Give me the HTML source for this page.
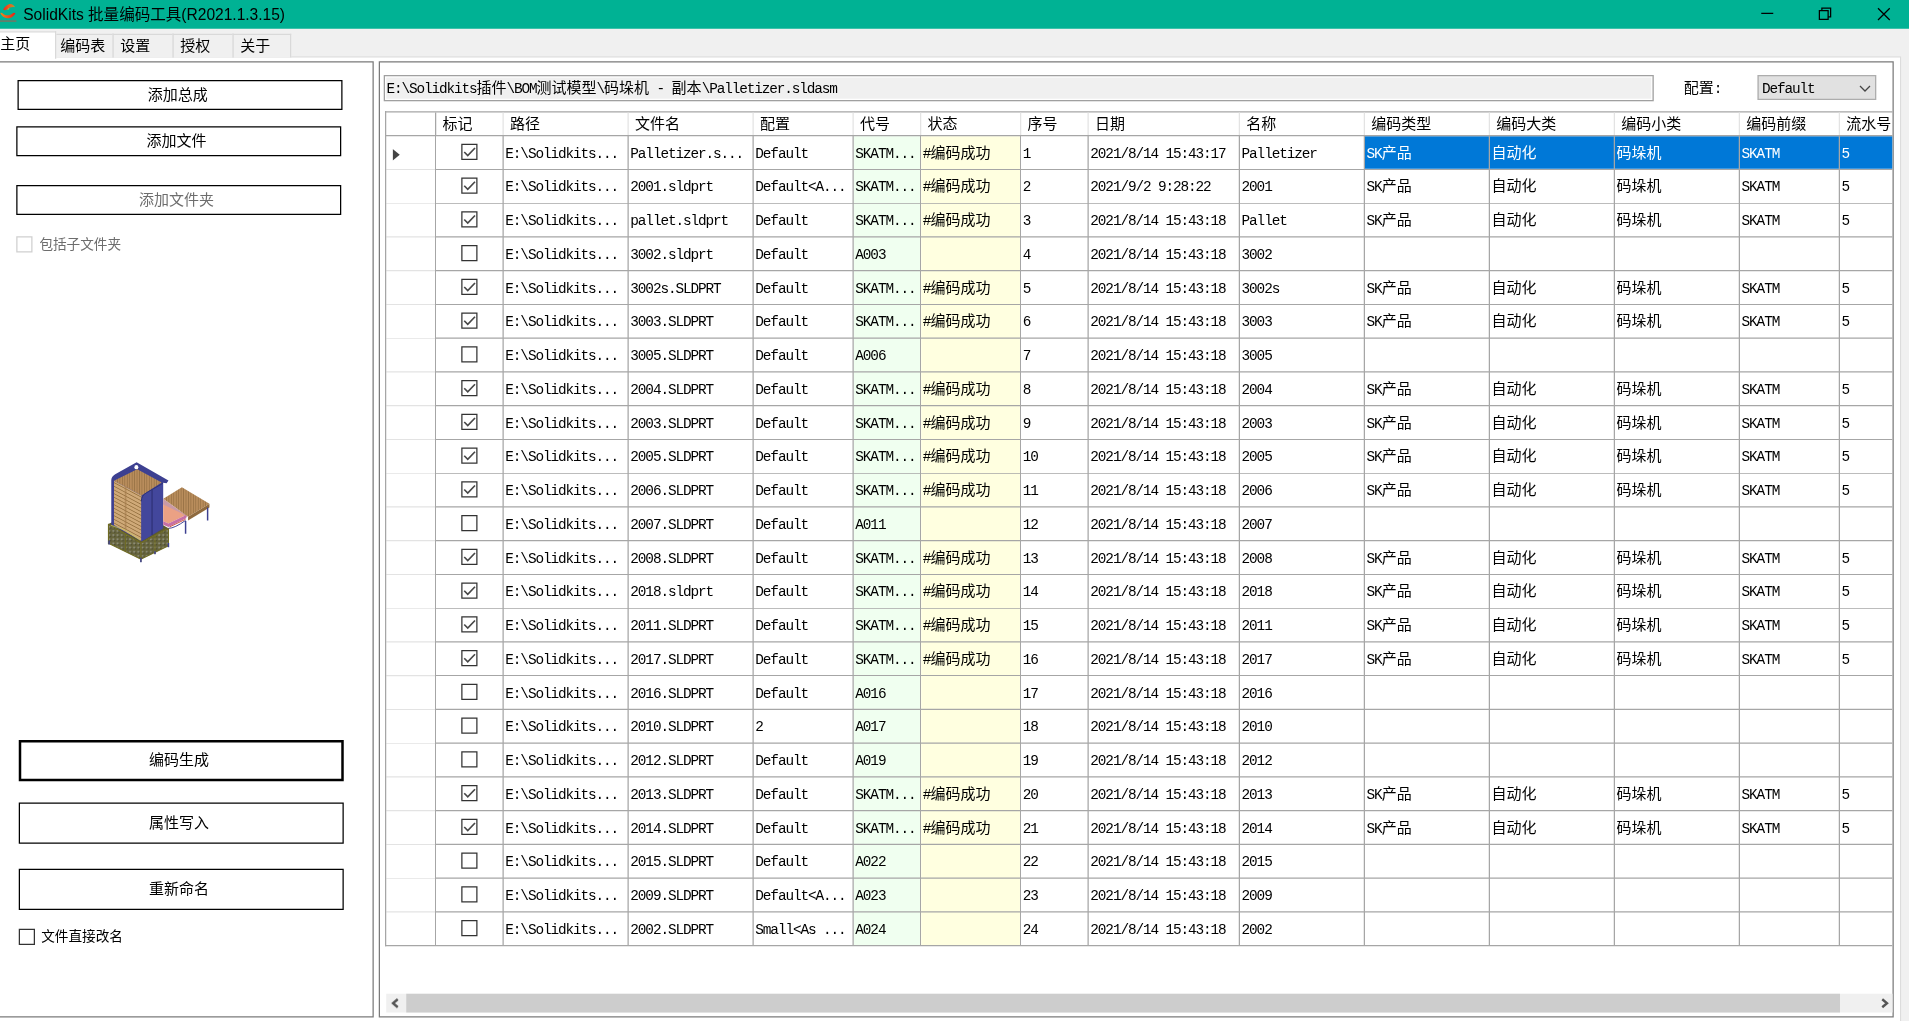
<!DOCTYPE html>
<html lang="zh-CN"><head><meta charset="utf-8"><title>SolidKits 批量编码工具(R2021.1.3.15)</title>
<style>
html,body{margin:0;padding:0}
body{width:1909px;height:1021px;overflow:hidden;background:#f0f0f0;position:relative}
#app{position:absolute;left:0;top:0;width:1528px;height:818px;transform:scale(1.25);transform-origin:0 0;overflow:hidden;will-change:transform;
 font-family:"Liberation Mono","Noto Sans CJK SC",monospace;font-size:11.5px;letter-spacing:-0.9px;color:#000}
.c{letter-spacing:0;font-size:12px}
#app div,#app span{box-sizing:border-box}
#app>div,#app>svg,#grid>div,#grid>svg{position:absolute}
#title{left:0;top:0;width:1528px;height:23px;background:#00b294}
#title .t{position:absolute;left:18.6px;top:1px;height:23px;line-height:22px;white-space:nowrap;
 font-family:"Liberation Sans","Noto Sans CJK SC",sans-serif;font-size:12.45px;letter-spacing:0}
.tab{top:27px;height:19px;border:1px solid #d9d9d9;border-bottom:none;background:#f0f0f0;
 font-family:"Liberation Sans","Noto Sans CJK SC",sans-serif;font-size:12px;letter-spacing:0;line-height:18px;padding-left:4px;white-space:nowrap}
.tab.sel{top:25px;height:22px;background:#fff;line-height:19px;padding-left:1px;border-left:none;z-index:3}
#page{left:-1px;top:45px;width:1522px;height:780px;background:#fff;border:1px solid #dcdcdc}
.panel{background:#fff;border:1px solid #7a7a7a}
.btn{background:#fff;border:1px solid #000;text-align:center;white-space:nowrap;letter-spacing:0;font-size:12px}
.txt{white-space:nowrap}
.cell{white-space:nowrap;overflow:hidden;padding-left:1.3px}
.hd{white-space:nowrap;overflow:hidden;padding-left:5px;letter-spacing:0;font-size:12px}
.ln{background:#a6a6a6}
.ll{background:#e3e3e3}
.cb{width:13px;height:13px;border:1px solid #333;background:#fff}
.sm{font-size:10.9px;letter-spacing:0}
</style></head><body><div id="app">

<div id="title">
<svg style="position:absolute;left:0;top:0" width="14.4" height="19.2" viewBox="0 0 18 24">
<defs><linearGradient id="g1" x1="0" x2="1"><stop offset="0" stop-color="#e62a1e"/><stop offset=".45" stop-color="#ea5a1e"/><stop offset="1" stop-color="#b8962e"/></linearGradient>
<linearGradient id="g2" x1="0" x2="1"><stop offset="0" stop-color="#f08a18"/><stop offset=".45" stop-color="#ea5a1c"/><stop offset="1" stop-color="#e81c14"/></linearGradient></defs>
<path d="M3.2 9.8C4.5 6.5 8 4 10.5 4.1C12.5 4.2 14 5.5 15.2 7.3C12.5 6.6 9.5 7.2 7.5 9.2C6 10.2 4.2 10.4 3.2 9.8Z" fill="url(#g1)"/>
<path d="M7 9.4L9.6 7.8L8.6 9.6Z" fill="#e8c020"/>
<path d="M0.3 13C1.2 12.6 2 12.8 2.8 13.6C5 16 9.5 16 12.3 13.4C13.2 12.5 14.6 12.4 15.5 13.2C14 16.5 10.5 18.4 7.5 18.2C4.2 18 1.5 16 0.3 13Z" fill="url(#g2)"/>
<rect x="0" y="20.2" width="16.4" height="1.8" fill="#8a6a5a" opacity=".7"/>
</svg>
<div class="t">SolidKits 批量编码工具(R2021.1.3.15)</div>
<svg style="position:absolute;left:1389px;top:0" width="138" height="23" viewBox="0 0 138 23" fill="none" stroke="#000" stroke-width="1">
<path d="M20 10.6H29.6"/>
<path d="M66.5 8.5H73.5V15.5H66.5Z M68.5 8.5V6.5H75.5V13.5H73.5"/>
<path d="M113.4 6.6L122.8 16M122.8 6.6L113.4 16"/>
</svg>
</div>
<div id="page"></div>
<div class="tab sel" style="left:0px;width:45px;padding-left:0.2px">主页</div>
<div class="tab" style="left:44px;width:47px;padding-left:3.2px">编码表</div>
<div class="tab" style="left:90px;width:49px;padding-left:5.3px">设置</div>
<div class="tab" style="left:138px;width:49px;padding-left:5.3px">授权</div>
<div class="tab" style="left:186px;width:47px;padding-left:5.3px">关于</div>
<div class="panel" style="left:-3px;top:49px;width:302px;height:765px"></div>
<div class="btn" style="left:14px;top:64px;width:260px;height:24px;line-height:24.6px;border-width:1px;color:#000;padding-right:3.4px">添加总成</div>
<div class="btn" style="left:13px;top:101px;width:260px;height:24px;line-height:24.6px;border-width:1px;color:#000;padding-right:3.4px">添加文件</div>
<div class="btn" style="left:13px;top:148px;width:260px;height:24px;line-height:24.6px;border-width:1px;color:#6d6d6d;padding-right:3.4px">添加文件夹</div>
<div class="cb" style="left:13px;top:189px;border-color:#cfcfcf"></div>
<div class="txt sm" style="left:31.5px;top:186.5px;height:18px;line-height:18px;color:#6d6d6d">包括子文件夹</div>
<div class="btn" style="left:15px;top:592px;width:260px;height:33px;line-height:31.6px;border-width:2px;color:#000;padding-right:3.4px">编码生成</div>
<div class="btn" style="left:15px;top:642px;width:260px;height:33px;line-height:33.6px;border-width:1px;color:#000;padding-right:3.4px">属性写入</div>
<div class="btn" style="left:15px;top:695px;width:260px;height:33px;line-height:33.6px;border-width:1px;color:#000;padding-right:3.4px">重新命名</div>
<div class="cb" style="left:15px;top:743px"></div>
<div class="txt sm" style="left:33px;top:740.5px;height:18px;line-height:18px">文件直接改名</div>
<svg style="left:76px;top:360px" width="104" height="100" viewBox="0 0 1062 1021">
<defs>
<pattern id="pw" width="20" height="15" patternUnits="userSpaceOnUse" patternTransform="skewY(-27)"><rect width="26" height="15" fill="#b98d5c"/><rect width="5" height="15" fill="#8f6a3e"/></pattern>
<pattern id="ps" width="40" height="30" patternUnits="userSpaceOnUse" patternTransform="skewY(28)"><rect width="40" height="30" fill="#cfa978"/><rect width="40" height="7" fill="#94703f"/></pattern>
<pattern id="pb" width="34" height="34" patternUnits="userSpaceOnUse"><rect width="34" height="34" fill="#66643c"/><rect x="6" y="8" width="16" height="14" fill="#8c8c78"/><rect x="20" y="22" width="10" height="8" fill="#44452e"/></pattern>
</defs>
<!-- back blue frame -->
<path d="M110 605L375 760L600 640L340 490Z" fill="#5d5b30"/>
<path d="M133 610V245Q135 215 165 198L340 100L600 250L585 272L557 268V640L380 745Z" fill="#3d4091"/>
<ellipse cx="338" cy="140" rx="16" ry="18" fill="#fff"/>
<!-- stack top and left face -->
<path d="M155 252L345 157L545 265L380 372Z" fill="url(#pw)"/>
<path d="M155 252L380 372V745L155 612Z" fill="url(#ps)"/>
<path d="M250 300V665" stroke="#a27a4a" stroke-width="14" opacity=".6"/>
<!-- blue front panels -->
<path d="M378 420Q380 372 420 350L555 272V642L378 748Z" fill="#43479c"/>
<path d="M466 325V695" stroke="#2c2f74" stroke-width="9"/>
<path d="M378 420Q380 372 420 350L555 272" fill="none" stroke="#2f3278" stroke-width="8"/>
<!-- base -->
<path d="M110 605L375 760V892L110 762Z" fill="url(#pb)"/>
<path d="M375 760L600 640V782L375 892Z" fill="url(#pb)"/>
<path d="M110 605L375 760L600 640M110 762L375 892L600 782M110 605V770M375 760V915M600 640V792M490 700V850M250 690V828" fill="none" stroke="#6e6a22" stroke-width="9"/>
<path d="M115 740V772M375 880V917M600 760V794M490 828V852" stroke="#3d4091" stroke-width="12"/>
<path d="M130 615L250 655L370 735" fill="none" stroke="#c9c46a" stroke-width="10" opacity=".7"/>
<!-- tray -->
<path d="M557 426L745 530L600 600L557 582Z" fill="#eba184"/>
<path d="M557 398L756 542L745 552L715 520L557 446Z" fill="#c99aa6"/>
<path d="M557 582L600 600L745 530V558L600 628L557 610Z" fill="#c66fa4"/>
<path d="M600 640Q650 640 740 575" fill="none" stroke="#3d4091" stroke-width="8"/>
<path d="M610 628L740 566" stroke="#c8402c" stroke-width="7"/>
<!-- right pallet -->
<path d="M558 398L710 305L935 440L760 545Z" fill="url(#pw)"/>
<path d="M760 545L935 440V470L760 575Z" fill="#8f6a3e"/>
<path d="M740 580V685M920 470V575" stroke="#3d4091" stroke-width="12"/>
</svg>

<div class="panel" style="left:303px;top:49px;width:1212px;height:765px"></div>
<div style="left:307px;top:60px;width:1016px;height:21px;background:#f0f0f0;border:1px solid #a0a0a0;box-shadow:inset 1px 1px 0 #fff,inset -1px -1px 0 #fff"></div>
<div class="txt" style="left:309.2px;top:59.75px;height:21px;line-height:21px">E:\Solidkits<span class="c">插件</span>\BOM<span class="c">测试模型</span>\<span class="c">码垛机</span> - <span class="c">副本</span>\Palletizer.sldasm</div>
<div class="txt" style="left:1347px;top:60px;height:21px;line-height:21px"><span class="c">配置</span>:</div>
<div style="left:1406px;top:60px;width:95px;height:20px;background:#e1e1e1;border:1px solid #adadad"></div>
<div class="txt" style="left:1409.5px;top:61.2px;height:20px;line-height:20px">Default</div>
<svg style="left:1486px;top:66px" width="12" height="10" viewBox="0 0 12 10" fill="none" stroke="#444" stroke-width="1"><path d="M2 2.8L6 6.8L10 2.8"/></svg>
<div id="grid" style="left:0;top:0;width:1514px;height:817px;overflow:hidden">
<div style="left:683px;top:109px;width:53px;height:647px;background:#f0fff0"></div>
<div style="left:737px;top:109px;width:79px;height:647px;background:#ffffe0"></div>
<div style="left:1092px;top:109px;width:422px;height:26px;background:#0078d7"></div>
<div class="hd" style="left:349px;top:90px;width:53px;height:18px;line-height:21.4px">标记</div>
<div class="hd" style="left:403px;top:90px;width:99px;height:18px;line-height:21.4px">路径</div>
<div class="hd" style="left:503px;top:90px;width:99px;height:18px;line-height:21.4px">文件名</div>
<div class="hd" style="left:603px;top:90px;width:79px;height:18px;line-height:21.4px">配置</div>
<div class="hd" style="left:683px;top:90px;width:53px;height:18px;line-height:21.4px">代号</div>
<div class="hd" style="left:737px;top:90px;width:79px;height:18px;line-height:21.4px">状态</div>
<div class="hd" style="left:817px;top:90px;width:53px;height:18px;line-height:21.4px">序号</div>
<div class="hd" style="left:871px;top:90px;width:120px;height:18px;line-height:21.4px">日期</div>
<div class="hd" style="left:992px;top:90px;width:99px;height:18px;line-height:21.4px">名称</div>
<div class="hd" style="left:1092px;top:90px;width:99px;height:18px;line-height:21.4px">编码类型</div>
<div class="hd" style="left:1192px;top:90px;width:99px;height:18px;line-height:21.4px">编码大类</div>
<div class="hd" style="left:1292px;top:90px;width:99px;height:18px;line-height:21.4px">编码小类</div>
<div class="hd" style="left:1392px;top:90px;width:79px;height:18px;line-height:21.4px">编码前缀</div>
<div class="hd" style="left:1472px;top:90px;width:88px;height:18px;line-height:21.4px">流水号</div>
<div class="cell" style="left:403px;top:109px;width:99px;height:26px;line-height:28px">E:\Solidkits...</div>
<div class="cell" style="left:503px;top:109px;width:99px;height:26px;line-height:28px">Palletizer.s...</div>
<div class="cell" style="left:603px;top:109px;width:79px;height:26px;line-height:28px">Default</div>
<div class="cell" style="left:683px;top:109px;width:53px;height:26px;line-height:28px">SKATM...</div>
<div class="cell" style="left:737px;top:109px;width:79px;height:26px;line-height:28px">#<span class="c">编码成功</span></div>
<div class="cell" style="left:817px;top:109px;width:53px;height:26px;line-height:28px">1</div>
<div class="cell" style="left:871px;top:109px;width:120px;height:26px;line-height:28px">2021/8/14 15:43:17</div>
<div class="cell" style="left:992px;top:109px;width:99px;height:26px;line-height:28px">Palletizer</div>
<div class="cell" style="left:1092px;top:109px;width:99px;height:26px;line-height:28px;color:#fff">SK<span class="c">产品</span></div>
<div class="cell" style="left:1192px;top:109px;width:99px;height:26px;line-height:28px;color:#fff"><span class="c">自动化</span></div>
<div class="cell" style="left:1292px;top:109px;width:99px;height:26px;line-height:28px;color:#fff"><span class="c">码垛机</span></div>
<div class="cell" style="left:1392px;top:109px;width:79px;height:26px;line-height:28px;color:#fff">SKATM</div>
<div class="cell" style="left:1472px;top:109px;width:88px;height:26px;line-height:28px;color:#fff">5</div>
<div class="cb" style="left:369px;top:115px"></div>
<svg style="left:369px;top:115px" width="13" height="13" viewBox="0 0 13 13" fill="none" stroke="#484848" stroke-width="1.35"><path d="M2.4 6.6L5.2 9.4L11 3.4"/></svg>
<div class="cell" style="left:403px;top:136px;width:99px;height:26px;line-height:28px">E:\Solidkits...</div>
<div class="cell" style="left:503px;top:136px;width:99px;height:26px;line-height:28px">2001.sldprt</div>
<div class="cell" style="left:603px;top:136px;width:79px;height:26px;line-height:28px">Default&lt;A...</div>
<div class="cell" style="left:683px;top:136px;width:53px;height:26px;line-height:28px">SKATM...</div>
<div class="cell" style="left:737px;top:136px;width:79px;height:26px;line-height:28px">#<span class="c">编码成功</span></div>
<div class="cell" style="left:817px;top:136px;width:53px;height:26px;line-height:28px">2</div>
<div class="cell" style="left:871px;top:136px;width:120px;height:26px;line-height:28px">2021/9/2 9:28:22</div>
<div class="cell" style="left:992px;top:136px;width:99px;height:26px;line-height:28px">2001</div>
<div class="cell" style="left:1092px;top:136px;width:99px;height:26px;line-height:28px">SK<span class="c">产品</span></div>
<div class="cell" style="left:1192px;top:136px;width:99px;height:26px;line-height:28px"><span class="c">自动化</span></div>
<div class="cell" style="left:1292px;top:136px;width:99px;height:26px;line-height:28px"><span class="c">码垛机</span></div>
<div class="cell" style="left:1392px;top:136px;width:79px;height:26px;line-height:28px">SKATM</div>
<div class="cell" style="left:1472px;top:136px;width:88px;height:26px;line-height:28px">5</div>
<div class="cb" style="left:369px;top:142px"></div>
<svg style="left:369px;top:142px" width="13" height="13" viewBox="0 0 13 13" fill="none" stroke="#484848" stroke-width="1.35"><path d="M2.4 6.6L5.2 9.4L11 3.4"/></svg>
<div class="cell" style="left:403px;top:163px;width:99px;height:26px;line-height:28px">E:\Solidkits...</div>
<div class="cell" style="left:503px;top:163px;width:99px;height:26px;line-height:28px">pallet.sldprt</div>
<div class="cell" style="left:603px;top:163px;width:79px;height:26px;line-height:28px">Default</div>
<div class="cell" style="left:683px;top:163px;width:53px;height:26px;line-height:28px">SKATM...</div>
<div class="cell" style="left:737px;top:163px;width:79px;height:26px;line-height:28px">#<span class="c">编码成功</span></div>
<div class="cell" style="left:817px;top:163px;width:53px;height:26px;line-height:28px">3</div>
<div class="cell" style="left:871px;top:163px;width:120px;height:26px;line-height:28px">2021/8/14 15:43:18</div>
<div class="cell" style="left:992px;top:163px;width:99px;height:26px;line-height:28px">Pallet</div>
<div class="cell" style="left:1092px;top:163px;width:99px;height:26px;line-height:28px">SK<span class="c">产品</span></div>
<div class="cell" style="left:1192px;top:163px;width:99px;height:26px;line-height:28px"><span class="c">自动化</span></div>
<div class="cell" style="left:1292px;top:163px;width:99px;height:26px;line-height:28px"><span class="c">码垛机</span></div>
<div class="cell" style="left:1392px;top:163px;width:79px;height:26px;line-height:28px">SKATM</div>
<div class="cell" style="left:1472px;top:163px;width:88px;height:26px;line-height:28px">5</div>
<div class="cb" style="left:369px;top:169px"></div>
<svg style="left:369px;top:169px" width="13" height="13" viewBox="0 0 13 13" fill="none" stroke="#484848" stroke-width="1.35"><path d="M2.4 6.6L5.2 9.4L11 3.4"/></svg>
<div class="cell" style="left:403px;top:190px;width:99px;height:26px;line-height:28px">E:\Solidkits...</div>
<div class="cell" style="left:503px;top:190px;width:99px;height:26px;line-height:28px">3002.sldprt</div>
<div class="cell" style="left:603px;top:190px;width:79px;height:26px;line-height:28px">Default</div>
<div class="cell" style="left:683px;top:190px;width:53px;height:26px;line-height:28px">A003</div>
<div class="cell" style="left:817px;top:190px;width:53px;height:26px;line-height:28px">4</div>
<div class="cell" style="left:871px;top:190px;width:120px;height:26px;line-height:28px">2021/8/14 15:43:18</div>
<div class="cell" style="left:992px;top:190px;width:99px;height:26px;line-height:28px">3002</div>
<div class="cb" style="left:369px;top:196px"></div>
<div class="cell" style="left:403px;top:217px;width:99px;height:26px;line-height:28px">E:\Solidkits...</div>
<div class="cell" style="left:503px;top:217px;width:99px;height:26px;line-height:28px">3002s.SLDPRT</div>
<div class="cell" style="left:603px;top:217px;width:79px;height:26px;line-height:28px">Default</div>
<div class="cell" style="left:683px;top:217px;width:53px;height:26px;line-height:28px">SKATM...</div>
<div class="cell" style="left:737px;top:217px;width:79px;height:26px;line-height:28px">#<span class="c">编码成功</span></div>
<div class="cell" style="left:817px;top:217px;width:53px;height:26px;line-height:28px">5</div>
<div class="cell" style="left:871px;top:217px;width:120px;height:26px;line-height:28px">2021/8/14 15:43:18</div>
<div class="cell" style="left:992px;top:217px;width:99px;height:26px;line-height:28px">3002s</div>
<div class="cell" style="left:1092px;top:217px;width:99px;height:26px;line-height:28px">SK<span class="c">产品</span></div>
<div class="cell" style="left:1192px;top:217px;width:99px;height:26px;line-height:28px"><span class="c">自动化</span></div>
<div class="cell" style="left:1292px;top:217px;width:99px;height:26px;line-height:28px"><span class="c">码垛机</span></div>
<div class="cell" style="left:1392px;top:217px;width:79px;height:26px;line-height:28px">SKATM</div>
<div class="cell" style="left:1472px;top:217px;width:88px;height:26px;line-height:28px">5</div>
<div class="cb" style="left:369px;top:223px"></div>
<svg style="left:369px;top:223px" width="13" height="13" viewBox="0 0 13 13" fill="none" stroke="#484848" stroke-width="1.35"><path d="M2.4 6.6L5.2 9.4L11 3.4"/></svg>
<div class="cell" style="left:403px;top:244px;width:99px;height:26px;line-height:28px">E:\Solidkits...</div>
<div class="cell" style="left:503px;top:244px;width:99px;height:26px;line-height:28px">3003.SLDPRT</div>
<div class="cell" style="left:603px;top:244px;width:79px;height:26px;line-height:28px">Default</div>
<div class="cell" style="left:683px;top:244px;width:53px;height:26px;line-height:28px">SKATM...</div>
<div class="cell" style="left:737px;top:244px;width:79px;height:26px;line-height:28px">#<span class="c">编码成功</span></div>
<div class="cell" style="left:817px;top:244px;width:53px;height:26px;line-height:28px">6</div>
<div class="cell" style="left:871px;top:244px;width:120px;height:26px;line-height:28px">2021/8/14 15:43:18</div>
<div class="cell" style="left:992px;top:244px;width:99px;height:26px;line-height:28px">3003</div>
<div class="cell" style="left:1092px;top:244px;width:99px;height:26px;line-height:28px">SK<span class="c">产品</span></div>
<div class="cell" style="left:1192px;top:244px;width:99px;height:26px;line-height:28px"><span class="c">自动化</span></div>
<div class="cell" style="left:1292px;top:244px;width:99px;height:26px;line-height:28px"><span class="c">码垛机</span></div>
<div class="cell" style="left:1392px;top:244px;width:79px;height:26px;line-height:28px">SKATM</div>
<div class="cell" style="left:1472px;top:244px;width:88px;height:26px;line-height:28px">5</div>
<div class="cb" style="left:369px;top:250px"></div>
<svg style="left:369px;top:250px" width="13" height="13" viewBox="0 0 13 13" fill="none" stroke="#484848" stroke-width="1.35"><path d="M2.4 6.6L5.2 9.4L11 3.4"/></svg>
<div class="cell" style="left:403px;top:271px;width:99px;height:26px;line-height:28px">E:\Solidkits...</div>
<div class="cell" style="left:503px;top:271px;width:99px;height:26px;line-height:28px">3005.SLDPRT</div>
<div class="cell" style="left:603px;top:271px;width:79px;height:26px;line-height:28px">Default</div>
<div class="cell" style="left:683px;top:271px;width:53px;height:26px;line-height:28px">A006</div>
<div class="cell" style="left:817px;top:271px;width:53px;height:26px;line-height:28px">7</div>
<div class="cell" style="left:871px;top:271px;width:120px;height:26px;line-height:28px">2021/8/14 15:43:18</div>
<div class="cell" style="left:992px;top:271px;width:99px;height:26px;line-height:28px">3005</div>
<div class="cb" style="left:369px;top:277px"></div>
<div class="cell" style="left:403px;top:298px;width:99px;height:26px;line-height:28px">E:\Solidkits...</div>
<div class="cell" style="left:503px;top:298px;width:99px;height:26px;line-height:28px">2004.SLDPRT</div>
<div class="cell" style="left:603px;top:298px;width:79px;height:26px;line-height:28px">Default</div>
<div class="cell" style="left:683px;top:298px;width:53px;height:26px;line-height:28px">SKATM...</div>
<div class="cell" style="left:737px;top:298px;width:79px;height:26px;line-height:28px">#<span class="c">编码成功</span></div>
<div class="cell" style="left:817px;top:298px;width:53px;height:26px;line-height:28px">8</div>
<div class="cell" style="left:871px;top:298px;width:120px;height:26px;line-height:28px">2021/8/14 15:43:18</div>
<div class="cell" style="left:992px;top:298px;width:99px;height:26px;line-height:28px">2004</div>
<div class="cell" style="left:1092px;top:298px;width:99px;height:26px;line-height:28px">SK<span class="c">产品</span></div>
<div class="cell" style="left:1192px;top:298px;width:99px;height:26px;line-height:28px"><span class="c">自动化</span></div>
<div class="cell" style="left:1292px;top:298px;width:99px;height:26px;line-height:28px"><span class="c">码垛机</span></div>
<div class="cell" style="left:1392px;top:298px;width:79px;height:26px;line-height:28px">SKATM</div>
<div class="cell" style="left:1472px;top:298px;width:88px;height:26px;line-height:28px">5</div>
<div class="cb" style="left:369px;top:304px"></div>
<svg style="left:369px;top:304px" width="13" height="13" viewBox="0 0 13 13" fill="none" stroke="#484848" stroke-width="1.35"><path d="M2.4 6.6L5.2 9.4L11 3.4"/></svg>
<div class="cell" style="left:403px;top:325px;width:99px;height:26px;line-height:28px">E:\Solidkits...</div>
<div class="cell" style="left:503px;top:325px;width:99px;height:26px;line-height:28px">2003.SLDPRT</div>
<div class="cell" style="left:603px;top:325px;width:79px;height:26px;line-height:28px">Default</div>
<div class="cell" style="left:683px;top:325px;width:53px;height:26px;line-height:28px">SKATM...</div>
<div class="cell" style="left:737px;top:325px;width:79px;height:26px;line-height:28px">#<span class="c">编码成功</span></div>
<div class="cell" style="left:817px;top:325px;width:53px;height:26px;line-height:28px">9</div>
<div class="cell" style="left:871px;top:325px;width:120px;height:26px;line-height:28px">2021/8/14 15:43:18</div>
<div class="cell" style="left:992px;top:325px;width:99px;height:26px;line-height:28px">2003</div>
<div class="cell" style="left:1092px;top:325px;width:99px;height:26px;line-height:28px">SK<span class="c">产品</span></div>
<div class="cell" style="left:1192px;top:325px;width:99px;height:26px;line-height:28px"><span class="c">自动化</span></div>
<div class="cell" style="left:1292px;top:325px;width:99px;height:26px;line-height:28px"><span class="c">码垛机</span></div>
<div class="cell" style="left:1392px;top:325px;width:79px;height:26px;line-height:28px">SKATM</div>
<div class="cell" style="left:1472px;top:325px;width:88px;height:26px;line-height:28px">5</div>
<div class="cb" style="left:369px;top:331px"></div>
<svg style="left:369px;top:331px" width="13" height="13" viewBox="0 0 13 13" fill="none" stroke="#484848" stroke-width="1.35"><path d="M2.4 6.6L5.2 9.4L11 3.4"/></svg>
<div class="cell" style="left:403px;top:352px;width:99px;height:26px;line-height:28px">E:\Solidkits...</div>
<div class="cell" style="left:503px;top:352px;width:99px;height:26px;line-height:28px">2005.SLDPRT</div>
<div class="cell" style="left:603px;top:352px;width:79px;height:26px;line-height:28px">Default</div>
<div class="cell" style="left:683px;top:352px;width:53px;height:26px;line-height:28px">SKATM...</div>
<div class="cell" style="left:737px;top:352px;width:79px;height:26px;line-height:28px">#<span class="c">编码成功</span></div>
<div class="cell" style="left:817px;top:352px;width:53px;height:26px;line-height:28px">10</div>
<div class="cell" style="left:871px;top:352px;width:120px;height:26px;line-height:28px">2021/8/14 15:43:18</div>
<div class="cell" style="left:992px;top:352px;width:99px;height:26px;line-height:28px">2005</div>
<div class="cell" style="left:1092px;top:352px;width:99px;height:26px;line-height:28px">SK<span class="c">产品</span></div>
<div class="cell" style="left:1192px;top:352px;width:99px;height:26px;line-height:28px"><span class="c">自动化</span></div>
<div class="cell" style="left:1292px;top:352px;width:99px;height:26px;line-height:28px"><span class="c">码垛机</span></div>
<div class="cell" style="left:1392px;top:352px;width:79px;height:26px;line-height:28px">SKATM</div>
<div class="cell" style="left:1472px;top:352px;width:88px;height:26px;line-height:28px">5</div>
<div class="cb" style="left:369px;top:358px"></div>
<svg style="left:369px;top:358px" width="13" height="13" viewBox="0 0 13 13" fill="none" stroke="#484848" stroke-width="1.35"><path d="M2.4 6.6L5.2 9.4L11 3.4"/></svg>
<div class="cell" style="left:403px;top:379px;width:99px;height:26px;line-height:28px">E:\Solidkits...</div>
<div class="cell" style="left:503px;top:379px;width:99px;height:26px;line-height:28px">2006.SLDPRT</div>
<div class="cell" style="left:603px;top:379px;width:79px;height:26px;line-height:28px">Default</div>
<div class="cell" style="left:683px;top:379px;width:53px;height:26px;line-height:28px">SKATM...</div>
<div class="cell" style="left:737px;top:379px;width:79px;height:26px;line-height:28px">#<span class="c">编码成功</span></div>
<div class="cell" style="left:817px;top:379px;width:53px;height:26px;line-height:28px">11</div>
<div class="cell" style="left:871px;top:379px;width:120px;height:26px;line-height:28px">2021/8/14 15:43:18</div>
<div class="cell" style="left:992px;top:379px;width:99px;height:26px;line-height:28px">2006</div>
<div class="cell" style="left:1092px;top:379px;width:99px;height:26px;line-height:28px">SK<span class="c">产品</span></div>
<div class="cell" style="left:1192px;top:379px;width:99px;height:26px;line-height:28px"><span class="c">自动化</span></div>
<div class="cell" style="left:1292px;top:379px;width:99px;height:26px;line-height:28px"><span class="c">码垛机</span></div>
<div class="cell" style="left:1392px;top:379px;width:79px;height:26px;line-height:28px">SKATM</div>
<div class="cell" style="left:1472px;top:379px;width:88px;height:26px;line-height:28px">5</div>
<div class="cb" style="left:369px;top:385px"></div>
<svg style="left:369px;top:385px" width="13" height="13" viewBox="0 0 13 13" fill="none" stroke="#484848" stroke-width="1.35"><path d="M2.4 6.6L5.2 9.4L11 3.4"/></svg>
<div class="cell" style="left:403px;top:406px;width:99px;height:26px;line-height:28px">E:\Solidkits...</div>
<div class="cell" style="left:503px;top:406px;width:99px;height:26px;line-height:28px">2007.SLDPRT</div>
<div class="cell" style="left:603px;top:406px;width:79px;height:26px;line-height:28px">Default</div>
<div class="cell" style="left:683px;top:406px;width:53px;height:26px;line-height:28px">A011</div>
<div class="cell" style="left:817px;top:406px;width:53px;height:26px;line-height:28px">12</div>
<div class="cell" style="left:871px;top:406px;width:120px;height:26px;line-height:28px">2021/8/14 15:43:18</div>
<div class="cell" style="left:992px;top:406px;width:99px;height:26px;line-height:28px">2007</div>
<div class="cb" style="left:369px;top:412px"></div>
<div class="cell" style="left:403px;top:433px;width:99px;height:26px;line-height:28px">E:\Solidkits...</div>
<div class="cell" style="left:503px;top:433px;width:99px;height:26px;line-height:28px">2008.SLDPRT</div>
<div class="cell" style="left:603px;top:433px;width:79px;height:26px;line-height:28px">Default</div>
<div class="cell" style="left:683px;top:433px;width:53px;height:26px;line-height:28px">SKATM...</div>
<div class="cell" style="left:737px;top:433px;width:79px;height:26px;line-height:28px">#<span class="c">编码成功</span></div>
<div class="cell" style="left:817px;top:433px;width:53px;height:26px;line-height:28px">13</div>
<div class="cell" style="left:871px;top:433px;width:120px;height:26px;line-height:28px">2021/8/14 15:43:18</div>
<div class="cell" style="left:992px;top:433px;width:99px;height:26px;line-height:28px">2008</div>
<div class="cell" style="left:1092px;top:433px;width:99px;height:26px;line-height:28px">SK<span class="c">产品</span></div>
<div class="cell" style="left:1192px;top:433px;width:99px;height:26px;line-height:28px"><span class="c">自动化</span></div>
<div class="cell" style="left:1292px;top:433px;width:99px;height:26px;line-height:28px"><span class="c">码垛机</span></div>
<div class="cell" style="left:1392px;top:433px;width:79px;height:26px;line-height:28px">SKATM</div>
<div class="cell" style="left:1472px;top:433px;width:88px;height:26px;line-height:28px">5</div>
<div class="cb" style="left:369px;top:439px"></div>
<svg style="left:369px;top:439px" width="13" height="13" viewBox="0 0 13 13" fill="none" stroke="#484848" stroke-width="1.35"><path d="M2.4 6.6L5.2 9.4L11 3.4"/></svg>
<div class="cell" style="left:403px;top:460px;width:99px;height:26px;line-height:28px">E:\Solidkits...</div>
<div class="cell" style="left:503px;top:460px;width:99px;height:26px;line-height:28px">2018.sldprt</div>
<div class="cell" style="left:603px;top:460px;width:79px;height:26px;line-height:28px">Default</div>
<div class="cell" style="left:683px;top:460px;width:53px;height:26px;line-height:28px">SKATM...</div>
<div class="cell" style="left:737px;top:460px;width:79px;height:26px;line-height:28px">#<span class="c">编码成功</span></div>
<div class="cell" style="left:817px;top:460px;width:53px;height:26px;line-height:28px">14</div>
<div class="cell" style="left:871px;top:460px;width:120px;height:26px;line-height:28px">2021/8/14 15:43:18</div>
<div class="cell" style="left:992px;top:460px;width:99px;height:26px;line-height:28px">2018</div>
<div class="cell" style="left:1092px;top:460px;width:99px;height:26px;line-height:28px">SK<span class="c">产品</span></div>
<div class="cell" style="left:1192px;top:460px;width:99px;height:26px;line-height:28px"><span class="c">自动化</span></div>
<div class="cell" style="left:1292px;top:460px;width:99px;height:26px;line-height:28px"><span class="c">码垛机</span></div>
<div class="cell" style="left:1392px;top:460px;width:79px;height:26px;line-height:28px">SKATM</div>
<div class="cell" style="left:1472px;top:460px;width:88px;height:26px;line-height:28px">5</div>
<div class="cb" style="left:369px;top:466px"></div>
<svg style="left:369px;top:466px" width="13" height="13" viewBox="0 0 13 13" fill="none" stroke="#484848" stroke-width="1.35"><path d="M2.4 6.6L5.2 9.4L11 3.4"/></svg>
<div class="cell" style="left:403px;top:487px;width:99px;height:26px;line-height:28px">E:\Solidkits...</div>
<div class="cell" style="left:503px;top:487px;width:99px;height:26px;line-height:28px">2011.SLDPRT</div>
<div class="cell" style="left:603px;top:487px;width:79px;height:26px;line-height:28px">Default</div>
<div class="cell" style="left:683px;top:487px;width:53px;height:26px;line-height:28px">SKATM...</div>
<div class="cell" style="left:737px;top:487px;width:79px;height:26px;line-height:28px">#<span class="c">编码成功</span></div>
<div class="cell" style="left:817px;top:487px;width:53px;height:26px;line-height:28px">15</div>
<div class="cell" style="left:871px;top:487px;width:120px;height:26px;line-height:28px">2021/8/14 15:43:18</div>
<div class="cell" style="left:992px;top:487px;width:99px;height:26px;line-height:28px">2011</div>
<div class="cell" style="left:1092px;top:487px;width:99px;height:26px;line-height:28px">SK<span class="c">产品</span></div>
<div class="cell" style="left:1192px;top:487px;width:99px;height:26px;line-height:28px"><span class="c">自动化</span></div>
<div class="cell" style="left:1292px;top:487px;width:99px;height:26px;line-height:28px"><span class="c">码垛机</span></div>
<div class="cell" style="left:1392px;top:487px;width:79px;height:26px;line-height:28px">SKATM</div>
<div class="cell" style="left:1472px;top:487px;width:88px;height:26px;line-height:28px">5</div>
<div class="cb" style="left:369px;top:493px"></div>
<svg style="left:369px;top:493px" width="13" height="13" viewBox="0 0 13 13" fill="none" stroke="#484848" stroke-width="1.35"><path d="M2.4 6.6L5.2 9.4L11 3.4"/></svg>
<div class="cell" style="left:403px;top:514px;width:99px;height:26px;line-height:28px">E:\Solidkits...</div>
<div class="cell" style="left:503px;top:514px;width:99px;height:26px;line-height:28px">2017.SLDPRT</div>
<div class="cell" style="left:603px;top:514px;width:79px;height:26px;line-height:28px">Default</div>
<div class="cell" style="left:683px;top:514px;width:53px;height:26px;line-height:28px">SKATM...</div>
<div class="cell" style="left:737px;top:514px;width:79px;height:26px;line-height:28px">#<span class="c">编码成功</span></div>
<div class="cell" style="left:817px;top:514px;width:53px;height:26px;line-height:28px">16</div>
<div class="cell" style="left:871px;top:514px;width:120px;height:26px;line-height:28px">2021/8/14 15:43:18</div>
<div class="cell" style="left:992px;top:514px;width:99px;height:26px;line-height:28px">2017</div>
<div class="cell" style="left:1092px;top:514px;width:99px;height:26px;line-height:28px">SK<span class="c">产品</span></div>
<div class="cell" style="left:1192px;top:514px;width:99px;height:26px;line-height:28px"><span class="c">自动化</span></div>
<div class="cell" style="left:1292px;top:514px;width:99px;height:26px;line-height:28px"><span class="c">码垛机</span></div>
<div class="cell" style="left:1392px;top:514px;width:79px;height:26px;line-height:28px">SKATM</div>
<div class="cell" style="left:1472px;top:514px;width:88px;height:26px;line-height:28px">5</div>
<div class="cb" style="left:369px;top:520px"></div>
<svg style="left:369px;top:520px" width="13" height="13" viewBox="0 0 13 13" fill="none" stroke="#484848" stroke-width="1.35"><path d="M2.4 6.6L5.2 9.4L11 3.4"/></svg>
<div class="cell" style="left:403px;top:541px;width:99px;height:26px;line-height:28px">E:\Solidkits...</div>
<div class="cell" style="left:503px;top:541px;width:99px;height:26px;line-height:28px">2016.SLDPRT</div>
<div class="cell" style="left:603px;top:541px;width:79px;height:26px;line-height:28px">Default</div>
<div class="cell" style="left:683px;top:541px;width:53px;height:26px;line-height:28px">A016</div>
<div class="cell" style="left:817px;top:541px;width:53px;height:26px;line-height:28px">17</div>
<div class="cell" style="left:871px;top:541px;width:120px;height:26px;line-height:28px">2021/8/14 15:43:18</div>
<div class="cell" style="left:992px;top:541px;width:99px;height:26px;line-height:28px">2016</div>
<div class="cb" style="left:369px;top:547px"></div>
<div class="cell" style="left:403px;top:568px;width:99px;height:26px;line-height:28px">E:\Solidkits...</div>
<div class="cell" style="left:503px;top:568px;width:99px;height:26px;line-height:28px">2010.SLDPRT</div>
<div class="cell" style="left:603px;top:568px;width:79px;height:26px;line-height:28px">2</div>
<div class="cell" style="left:683px;top:568px;width:53px;height:26px;line-height:28px">A017</div>
<div class="cell" style="left:817px;top:568px;width:53px;height:26px;line-height:28px">18</div>
<div class="cell" style="left:871px;top:568px;width:120px;height:26px;line-height:28px">2021/8/14 15:43:18</div>
<div class="cell" style="left:992px;top:568px;width:99px;height:26px;line-height:28px">2010</div>
<div class="cb" style="left:369px;top:574px"></div>
<div class="cell" style="left:403px;top:595px;width:99px;height:26px;line-height:28px">E:\Solidkits...</div>
<div class="cell" style="left:503px;top:595px;width:99px;height:26px;line-height:28px">2012.SLDPRT</div>
<div class="cell" style="left:603px;top:595px;width:79px;height:26px;line-height:28px">Default</div>
<div class="cell" style="left:683px;top:595px;width:53px;height:26px;line-height:28px">A019</div>
<div class="cell" style="left:817px;top:595px;width:53px;height:26px;line-height:28px">19</div>
<div class="cell" style="left:871px;top:595px;width:120px;height:26px;line-height:28px">2021/8/14 15:43:18</div>
<div class="cell" style="left:992px;top:595px;width:99px;height:26px;line-height:28px">2012</div>
<div class="cb" style="left:369px;top:601px"></div>
<div class="cell" style="left:403px;top:622px;width:99px;height:26px;line-height:28px">E:\Solidkits...</div>
<div class="cell" style="left:503px;top:622px;width:99px;height:26px;line-height:28px">2013.SLDPRT</div>
<div class="cell" style="left:603px;top:622px;width:79px;height:26px;line-height:28px">Default</div>
<div class="cell" style="left:683px;top:622px;width:53px;height:26px;line-height:28px">SKATM...</div>
<div class="cell" style="left:737px;top:622px;width:79px;height:26px;line-height:28px">#<span class="c">编码成功</span></div>
<div class="cell" style="left:817px;top:622px;width:53px;height:26px;line-height:28px">20</div>
<div class="cell" style="left:871px;top:622px;width:120px;height:26px;line-height:28px">2021/8/14 15:43:18</div>
<div class="cell" style="left:992px;top:622px;width:99px;height:26px;line-height:28px">2013</div>
<div class="cell" style="left:1092px;top:622px;width:99px;height:26px;line-height:28px">SK<span class="c">产品</span></div>
<div class="cell" style="left:1192px;top:622px;width:99px;height:26px;line-height:28px"><span class="c">自动化</span></div>
<div class="cell" style="left:1292px;top:622px;width:99px;height:26px;line-height:28px"><span class="c">码垛机</span></div>
<div class="cell" style="left:1392px;top:622px;width:79px;height:26px;line-height:28px">SKATM</div>
<div class="cell" style="left:1472px;top:622px;width:88px;height:26px;line-height:28px">5</div>
<div class="cb" style="left:369px;top:628px"></div>
<svg style="left:369px;top:628px" width="13" height="13" viewBox="0 0 13 13" fill="none" stroke="#484848" stroke-width="1.35"><path d="M2.4 6.6L5.2 9.4L11 3.4"/></svg>
<div class="cell" style="left:403px;top:649px;width:99px;height:26px;line-height:28px">E:\Solidkits...</div>
<div class="cell" style="left:503px;top:649px;width:99px;height:26px;line-height:28px">2014.SLDPRT</div>
<div class="cell" style="left:603px;top:649px;width:79px;height:26px;line-height:28px">Default</div>
<div class="cell" style="left:683px;top:649px;width:53px;height:26px;line-height:28px">SKATM...</div>
<div class="cell" style="left:737px;top:649px;width:79px;height:26px;line-height:28px">#<span class="c">编码成功</span></div>
<div class="cell" style="left:817px;top:649px;width:53px;height:26px;line-height:28px">21</div>
<div class="cell" style="left:871px;top:649px;width:120px;height:26px;line-height:28px">2021/8/14 15:43:18</div>
<div class="cell" style="left:992px;top:649px;width:99px;height:26px;line-height:28px">2014</div>
<div class="cell" style="left:1092px;top:649px;width:99px;height:26px;line-height:28px">SK<span class="c">产品</span></div>
<div class="cell" style="left:1192px;top:649px;width:99px;height:26px;line-height:28px"><span class="c">自动化</span></div>
<div class="cell" style="left:1292px;top:649px;width:99px;height:26px;line-height:28px"><span class="c">码垛机</span></div>
<div class="cell" style="left:1392px;top:649px;width:79px;height:26px;line-height:28px">SKATM</div>
<div class="cell" style="left:1472px;top:649px;width:88px;height:26px;line-height:28px">5</div>
<div class="cb" style="left:369px;top:655px"></div>
<svg style="left:369px;top:655px" width="13" height="13" viewBox="0 0 13 13" fill="none" stroke="#484848" stroke-width="1.35"><path d="M2.4 6.6L5.2 9.4L11 3.4"/></svg>
<div class="cell" style="left:403px;top:676px;width:99px;height:26px;line-height:28px">E:\Solidkits...</div>
<div class="cell" style="left:503px;top:676px;width:99px;height:26px;line-height:28px">2015.SLDPRT</div>
<div class="cell" style="left:603px;top:676px;width:79px;height:26px;line-height:28px">Default</div>
<div class="cell" style="left:683px;top:676px;width:53px;height:26px;line-height:28px">A022</div>
<div class="cell" style="left:817px;top:676px;width:53px;height:26px;line-height:28px">22</div>
<div class="cell" style="left:871px;top:676px;width:120px;height:26px;line-height:28px">2021/8/14 15:43:18</div>
<div class="cell" style="left:992px;top:676px;width:99px;height:26px;line-height:28px">2015</div>
<div class="cb" style="left:369px;top:682px"></div>
<div class="cell" style="left:403px;top:703px;width:99px;height:26px;line-height:28px">E:\Solidkits...</div>
<div class="cell" style="left:503px;top:703px;width:99px;height:26px;line-height:28px">2009.SLDPRT</div>
<div class="cell" style="left:603px;top:703px;width:79px;height:26px;line-height:28px">Default&lt;A...</div>
<div class="cell" style="left:683px;top:703px;width:53px;height:26px;line-height:28px">A023</div>
<div class="cell" style="left:817px;top:703px;width:53px;height:26px;line-height:28px">23</div>
<div class="cell" style="left:871px;top:703px;width:120px;height:26px;line-height:28px">2021/8/14 15:43:18</div>
<div class="cell" style="left:992px;top:703px;width:99px;height:26px;line-height:28px">2009</div>
<div class="cb" style="left:369px;top:709px"></div>
<div class="cell" style="left:403px;top:730px;width:99px;height:26px;line-height:28px">E:\Solidkits...</div>
<div class="cell" style="left:503px;top:730px;width:99px;height:26px;line-height:28px">2002.SLDPRT</div>
<div class="cell" style="left:603px;top:730px;width:79px;height:26px;line-height:28px">Small&lt;As ...</div>
<div class="cell" style="left:683px;top:730px;width:53px;height:26px;line-height:28px">A024</div>
<div class="cell" style="left:817px;top:730px;width:53px;height:26px;line-height:28px">24</div>
<div class="cell" style="left:871px;top:730px;width:120px;height:26px;line-height:28px">2021/8/14 15:43:18</div>
<div class="cell" style="left:992px;top:730px;width:99px;height:26px;line-height:28px">2002</div>
<div class="cb" style="left:369px;top:736px"></div>
<svg style="left:313.9px;top:118.6px" width="7" height="10" viewBox="0 0 7 10"><path d="M0.2 0.2L5.8 4.7L0.2 9.4Z" fill="#444"/></svg>
<div class="ln" style="left:308px;top:89px;width:1206px;height:1px"></div>
<div class="ln" style="left:308px;top:108px;width:1206px;height:1px"></div>
<div class="ln" style="left:348px;top:135px;width:1166px;height:1px"></div>
<div class="ll" style="left:309px;top:135px;width:39px;height:1px"></div>
<div class="ln" style="left:348px;top:162px;width:1166px;height:1px"></div>
<div class="ll" style="left:309px;top:162px;width:39px;height:1px"></div>
<div class="ln" style="left:348px;top:189px;width:1166px;height:1px"></div>
<div class="ll" style="left:309px;top:189px;width:39px;height:1px"></div>
<div class="ln" style="left:348px;top:216px;width:1166px;height:1px"></div>
<div class="ll" style="left:309px;top:216px;width:39px;height:1px"></div>
<div class="ln" style="left:348px;top:243px;width:1166px;height:1px"></div>
<div class="ll" style="left:309px;top:243px;width:39px;height:1px"></div>
<div class="ln" style="left:348px;top:270px;width:1166px;height:1px"></div>
<div class="ll" style="left:309px;top:270px;width:39px;height:1px"></div>
<div class="ln" style="left:348px;top:297px;width:1166px;height:1px"></div>
<div class="ll" style="left:309px;top:297px;width:39px;height:1px"></div>
<div class="ln" style="left:348px;top:324px;width:1166px;height:1px"></div>
<div class="ll" style="left:309px;top:324px;width:39px;height:1px"></div>
<div class="ln" style="left:348px;top:351px;width:1166px;height:1px"></div>
<div class="ll" style="left:309px;top:351px;width:39px;height:1px"></div>
<div class="ln" style="left:348px;top:378px;width:1166px;height:1px"></div>
<div class="ll" style="left:309px;top:378px;width:39px;height:1px"></div>
<div class="ln" style="left:348px;top:405px;width:1166px;height:1px"></div>
<div class="ll" style="left:309px;top:405px;width:39px;height:1px"></div>
<div class="ln" style="left:348px;top:432px;width:1166px;height:1px"></div>
<div class="ll" style="left:309px;top:432px;width:39px;height:1px"></div>
<div class="ln" style="left:348px;top:459px;width:1166px;height:1px"></div>
<div class="ll" style="left:309px;top:459px;width:39px;height:1px"></div>
<div class="ln" style="left:348px;top:486px;width:1166px;height:1px"></div>
<div class="ll" style="left:309px;top:486px;width:39px;height:1px"></div>
<div class="ln" style="left:348px;top:513px;width:1166px;height:1px"></div>
<div class="ll" style="left:309px;top:513px;width:39px;height:1px"></div>
<div class="ln" style="left:348px;top:540px;width:1166px;height:1px"></div>
<div class="ll" style="left:309px;top:540px;width:39px;height:1px"></div>
<div class="ln" style="left:348px;top:567px;width:1166px;height:1px"></div>
<div class="ll" style="left:309px;top:567px;width:39px;height:1px"></div>
<div class="ln" style="left:348px;top:594px;width:1166px;height:1px"></div>
<div class="ll" style="left:309px;top:594px;width:39px;height:1px"></div>
<div class="ln" style="left:348px;top:621px;width:1166px;height:1px"></div>
<div class="ll" style="left:309px;top:621px;width:39px;height:1px"></div>
<div class="ln" style="left:348px;top:648px;width:1166px;height:1px"></div>
<div class="ll" style="left:309px;top:648px;width:39px;height:1px"></div>
<div class="ln" style="left:348px;top:675px;width:1166px;height:1px"></div>
<div class="ll" style="left:309px;top:675px;width:39px;height:1px"></div>
<div class="ln" style="left:348px;top:702px;width:1166px;height:1px"></div>
<div class="ll" style="left:309px;top:702px;width:39px;height:1px"></div>
<div class="ln" style="left:348px;top:729px;width:1166px;height:1px"></div>
<div class="ll" style="left:309px;top:729px;width:39px;height:1px"></div>
<div class="ln" style="left:308px;top:756px;width:1206px;height:1px"></div>
<div class="ln" style="left:308px;top:89px;width:1px;height:668px"></div>
<div class="ln" style="left:348px;top:90px;width:1px;height:18px"></div>
<div class="ln" style="left:348px;top:108px;width:1px;height:648px"></div>
<div class="ll" style="left:402px;top:90px;width:1px;height:18px"></div>
<div class="ln" style="left:402px;top:108px;width:1px;height:648px"></div>
<div class="ll" style="left:502px;top:90px;width:1px;height:18px"></div>
<div class="ln" style="left:502px;top:108px;width:1px;height:648px"></div>
<div class="ll" style="left:602px;top:90px;width:1px;height:18px"></div>
<div class="ln" style="left:602px;top:108px;width:1px;height:648px"></div>
<div class="ll" style="left:682px;top:90px;width:1px;height:18px"></div>
<div class="ln" style="left:682px;top:108px;width:1px;height:648px"></div>
<div class="ll" style="left:736px;top:90px;width:1px;height:18px"></div>
<div class="ln" style="left:736px;top:108px;width:1px;height:648px"></div>
<div class="ll" style="left:816px;top:90px;width:1px;height:18px"></div>
<div class="ln" style="left:816px;top:108px;width:1px;height:648px"></div>
<div class="ll" style="left:870px;top:90px;width:1px;height:18px"></div>
<div class="ln" style="left:870px;top:108px;width:1px;height:648px"></div>
<div class="ll" style="left:991px;top:90px;width:1px;height:18px"></div>
<div class="ln" style="left:991px;top:108px;width:1px;height:648px"></div>
<div class="ll" style="left:1091px;top:90px;width:1px;height:18px"></div>
<div class="ln" style="left:1091px;top:108px;width:1px;height:648px"></div>
<div class="ll" style="left:1191px;top:90px;width:1px;height:18px"></div>
<div class="ln" style="left:1191px;top:108px;width:1px;height:648px"></div>
<div class="ll" style="left:1291px;top:90px;width:1px;height:18px"></div>
<div class="ln" style="left:1291px;top:108px;width:1px;height:648px"></div>
<div class="ll" style="left:1391px;top:90px;width:1px;height:18px"></div>
<div class="ln" style="left:1391px;top:108px;width:1px;height:648px"></div>
<div class="ll" style="left:1471px;top:90px;width:1px;height:18px"></div>
<div class="ln" style="left:1471px;top:108px;width:1px;height:648px"></div>
</div>
<div style="left:309px;top:795px;width:1205px;height:15px;background:#f0f0f0"></div>
<div style="left:325px;top:795px;width:1147px;height:15px;background:#cdcdcd"></div>
<svg style="left:311px;top:797px" width="10" height="11" viewBox="0 0 10 11" fill="none" stroke="#555" stroke-width="1.9"><path d="M7.2 2.4L3.4 5.6L7.2 8.8"/></svg>
<svg style="left:1502px;top:797px" width="10" height="11" viewBox="0 0 10 11" fill="none" stroke="#555" stroke-width="1.9"><path d="M3.8 2.4L7.6 5.6L3.8 8.8"/></svg>
</div></body></html>
